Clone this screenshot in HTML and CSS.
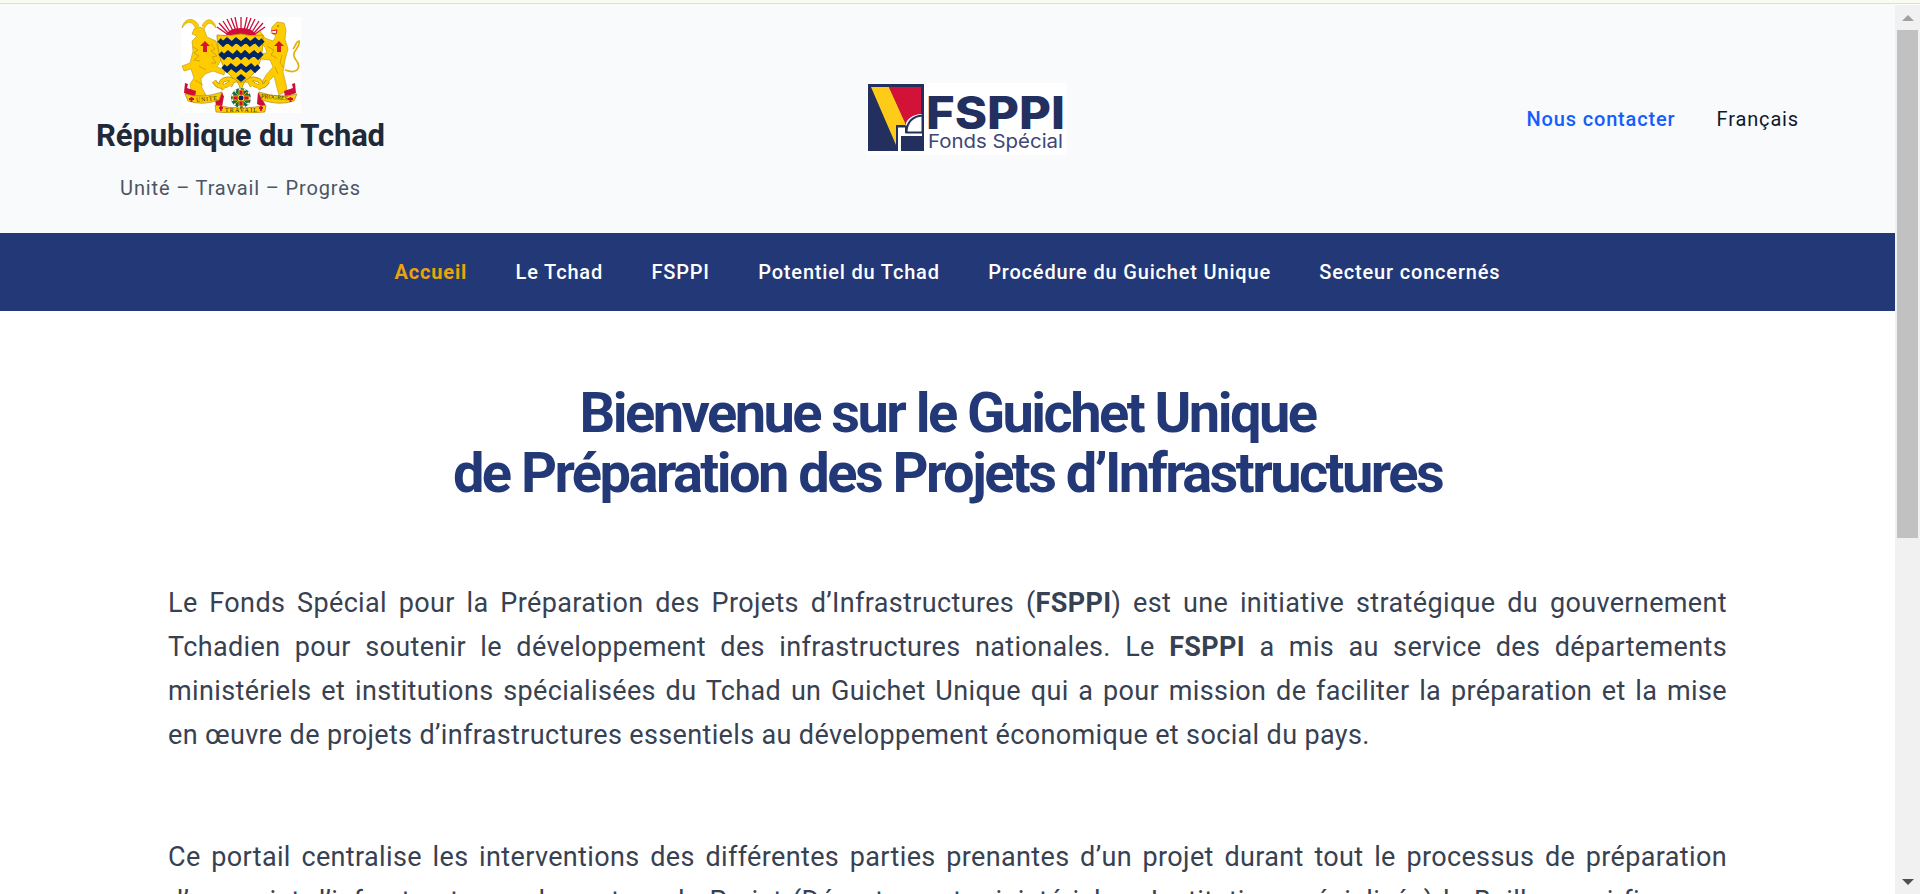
FILE: index.html
```html
<!DOCTYPE html>
<html lang="fr">
<head>
<meta charset="utf-8">
<title>FSPPI</title>
<link rel="stylesheet" href="styles.css">
</head>
<body>
<div class="strip"></div>
<div class="window">
<div class="page">
  <header class="header">
    <div class="brand">
      <svg class="arms" viewBox="0 0 120 96">
        <rect width="120" height="96" fill="#fff"/>
        <g stroke="#d00c3b" stroke-width="1.3"><path d="M47 16L38 6M49 15L42 4M52 14L46 2M55 14L50 1M57 14L54 0M60 14V0M63 14L66 0M65 14L70 1M68 14L74 2M71 15L78 4M73 16L82 6M46 17L36 10M74 17L84 10"/></g>
        <path d="M45 18Q48 11 60 11T75 18Z" fill="#d00c3b"/>
        <g fill="#fc0" stroke="#b99513" stroke-width=".6">
          <path d="M13 12Q17 8 23 12L26 20L35 24L37 32L40 43L36 50L44 53L43 58L32 54L24 57L20 62L21 71L25 78L14 79L10 74L9 67L13 61L10 52L3 54L1 49L9 46L12 34L11 24L16 19L11 17Z"/>
          <path d="M18 9C14 0 3 0 1 11C7 2 12 5 15 12M21 9C25 0 33 1 35 11C29 3 26 6 23 12"/>
          <path d="M91 10L96 5L103 6L105 13L104 22L107 32L104 43L102 55L105 67L106 74L98 78L96 71L93 59L86 66L80 67L85 58L92 50L89 43L79 42L78 37L86 36L84 30L78 24L75 18L79 14L84 21L92 24L95 19L90 16Z"/>
        </g>
        <path d="M104 53C118 58 120 49 115 43C108 34 120 32 118 24C115 24 115 29 112 32" fill="none" stroke="#e0b010" stroke-width="1.700"/>
        <path d="M90 14L96 13L95 17L91 16" fill="#fff" stroke="#d00c3b" stroke-width="1"/>
        <circle cx="97" cy="9" r=".7" fill="#443300"/>
        <path d="M24 24l5 5h-3v6h-4v-6h-3zM98 24l5 5h-3v6h-4v-6h-3z" fill="#d9142d"/>
        <g fill="none" stroke="#b99513" stroke-width=".7"><path d="M12 30l5 3-4 3 5 3-5 4 6 1M30 27l4 5-4 2 6 5-5 1 4 6-5 0M18 49l7 4M14 63l8 5M86 29l7 4-3 5 6 3M101 38l-2 8 4 5M94 50l3 7"/></g>
        <path d="M33 64q6 10 16 2q8-7 11 2q3-9 11-2q10 8 16-2M43 72q-7-8 3-10q8-1 3 7M77 72q7-8-3-10q-8-1-3 7" fill="none" stroke="#b99513" stroke-width="4.600"/>
        <path d="M33 64q6 10 16 2q8-7 11 2q3-9 11-2q10 8 16-2M43 72q-7-8 3-10q8-1 3 7M77 72q7-8-3-10q-8-1-3 7" fill="none" stroke="#fc0" stroke-width="3.200"/>
        <path d="M4 66l3 1-1 4 9 3-1 6-11-4zM114 66l-3 1 1 4-9 3 1 6 11-4zM34 82l9-3-2 11-6-1zM77 75l7 12 1 4-9-4zM35 84l6-9 2 5z" fill="#d00c3b"/>
        <path d="M4 77Q21 82 41 75L38 83Q22 89 7 84ZM116 77Q99 82 78 75L81 83Q98 89 113 84ZM34 88Q47 91 60 91T85 88L84 95Q60 98 35 95Z" fill="#fc0" stroke="#a88718" stroke-width=".7"/>
        <path d="M36 18Q47 20 60 17Q73 20 82 18C82 42 78 57 60 66C42 57 37 42 36 18Z" fill="#fc0" stroke="#c79c08"/>
        <g fill="none" stroke="#002664" stroke-width="4.600"><path d="M38 23l4 4 4-4 5 4 4-4 5 4 5-4 4 4 5-4 4 4 4-4M39 36l4 4 4-4 5 4 4-4 4 4 4-4 4 4 5-4 4 4 4-4M42 49l4 4 4-4 5 4 5-4 5 4 5-4 4 4 4-4"/></g>
        <path d="M55 61l5-4 5 4-5 4z" fill="#002664"/>
        <circle cx="60" cy="81" r="10" fill="#166b42"/><circle cx="60" cy="81" r="9" fill="none" stroke="#fff" stroke-width="1.500" stroke-dasharray="2 3"/>
        <path d="M58 73h4v6h6v4h-6v6h-4v-6h-6v-4h6zM54 75l12 12M66 75L54 87" fill="#d00c3b" stroke="#fc0" stroke-width=".8"/><circle cx="60" cy="81" r="3" fill="#002664" stroke="#fc0"/>
        <g fill="#302a12" font-family="Liberation Serif,serif" font-size="6"><text x="15" y="84" textLength="21" transform="rotate(-5 25 82)">UNITE</text><text x="44" y="95" textLength="32">TRAVAIL</text><text x="80" y="82" textLength="27" transform="rotate(5 92 81)">PROGRES</text></g>
        <path d="M8 82h5M10.500 80v5M107 82h5M109.500 80v5M38 91h4M40 89v5M78 91h4M80 89v5" stroke="#d00c3b" stroke-width="1.800"/>
      </svg>
      <div class="country">République du Tchad</div>
      <div class="motto">Unité – Travail – Progrès</div>
    </div>
    <svg class="logo" viewBox="0 0 200 72">
      <rect width="200" height="72" fill="#fff"/>
      <path d="M1 1h56v67H1z" fill="#23305f"/>
      <path d="M4 4h18L38 39v3h-9v20z" fill="#ffcb19"/>
      <path d="M22 4h32v28C47 32 41 36 39 42z" fill="#d31237"/>
      <path d="M31 44h7C39 36 46 31 55 31v22H34v15h-3z" fill="#fff"/>
      <path d="M30 58V43.500H39V50M39.500 49.500C39.500 39 46 33 55.500 32.500V49.500Z" fill="none" stroke="#23305f" stroke-width="2"/>
      <path d="M35 54h22v14H35z" fill="#23305f"/>
      <text class="logo-name" x="59" y="46" textLength="139" lengthAdjust="spacingAndGlyphs">FSPPI</text>
      <text class="logo-sub" x="61" y="65" textLength="135" lengthAdjust="spacingAndGlyphs">Fonds Spécial</text>
    </svg>
    <div class="links"><a class="contact">Nous contacter</a><a class="lang">Français</a></div>
  </header>
  <nav class="nav">
    <a class="active">Accueil</a><a>Le Tchad</a><a>FSPPI</a><a>Potentiel du Tchad</a><a>Procédure du Guichet Unique</a><a>Secteur concernés</a>
  </nav>
  <main class="main">
    <h1>Bienvenue sur le Guichet Unique<br>de Préparation des Projets d’Infrastructures</h1>
    <p>Le Fonds Spécial pour la Préparation des Projets d’Infrastructures (<b>FSPPI</b>) est une initiative stratégique du gouvernement Tchadien pour soutenir le développement des infrastructures nationales. Le <b>FSPPI</b> a mis au service des départements ministériels et institutions spécialisées du Tchad un Guichet Unique qui a pour mission de faciliter la préparation et la mise en&nbsp;œuvre de projets d’infrastructures essentiels au développement économique et social du pays.</p>
    <p>Ce portail centralise les interventions des différentes parties prenantes d’un projet durant tout le processus de préparation <span class="roles">d’un&nbsp;projet d’infrastructures : le porteur du Projet (Département ministériel ou Institution spécialisée) le Bailleur qui finance</span></p>
  </main>
</div>
<div class="scrollbar"><i class="up"></i><div class="thumb"></div><i class="down"></i></div>
</div>
</body>
</html>
```

FILE: styles.css
```css
* { box-sizing: border-box; }
body { margin: 0; height: 894px; overflow: hidden; background: #fff; font-family: Roboto, sans-serif; display: flex; flex-direction: column; }
.strip { height: 4px; flex: none; background: #f9fcf0; border-bottom: 1px solid #dde2cf; }
.window { display: flex; height: 890px; }
.page { width: 1895px; overflow: hidden; }
.header { height: 229px; background: #f9fafc; display: grid; grid-template-columns: 1fr 200px 1fr; align-items: start; padding: 0 96px; }
.brand { width: 289px; display: flex; flex-direction: column; align-items: center; padding-top: 13px; white-space: nowrap; }
.arms { width: 120px; height: 96px; display: block; }
.country { font-size: 31px; font-weight: 700; line-height: 44px; margin-top: 1px; color: #1f2937; letter-spacing: -0.15px; }
.motto { font-size: 20px; line-height: 30px; margin-top: 15px; color: #4b5563; letter-spacing: 0.85px; }
.logo { width: 200px; height: 72px; margin-top: 79px; margin-left: 19px; }
.logo-name { font: 800 45px Inter, sans-serif; fill: #23305f; }
.logo-sub { font: 400 19px Inter, sans-serif; fill: #3c4775; }
.links { display: flex; justify-content: flex-end; gap: 41px; padding-top: 100px; font-size: 20px; line-height: 30px; letter-spacing: 0.85px; white-space: nowrap; }
.contact { color: #155dfc; font-weight: 500; }
.lang { color: #0f172a; }
.nav { height: 78px; background: #233876; color: #fff; display: flex; justify-content: center; align-items: center; gap: 48.400px; font-size: 20px; font-weight: 500; letter-spacing: 0.82px; white-space: nowrap; }
.active { color: #eaa30a; font-weight: 700; }
.main { padding: 72px 168px 0; }
h1 { margin: 0 0 78px; font-size: 56px; line-height: 60px; font-weight: 700; letter-spacing: -2.560px; text-align: center; color: #233876; white-space: nowrap; }
p { margin: 0 0 78px; width: 1559px; font-size: 27px; line-height: 44px; letter-spacing: 0.36px; color: #374151; text-align: justify; }
.roles { word-spacing: 2.400px; }
.scrollbar { width: 25px; height: 889px; margin-top: 1px; background: #f1f1f1; display: flex; flex-direction: column; align-items: center; padding: 10px 0 9px; }
.up, .down { border: 6px solid transparent; width: 0; height: 0; flex: none; }
.up { border-top: 0; border-bottom-color: #a0a0a0; }
.down { border-bottom: 0; border-top-color: #505050; margin-top: auto; }
.thumb { width: 21px; height: 508px; margin-top: 9px; background: #c1c1c1; }
```
